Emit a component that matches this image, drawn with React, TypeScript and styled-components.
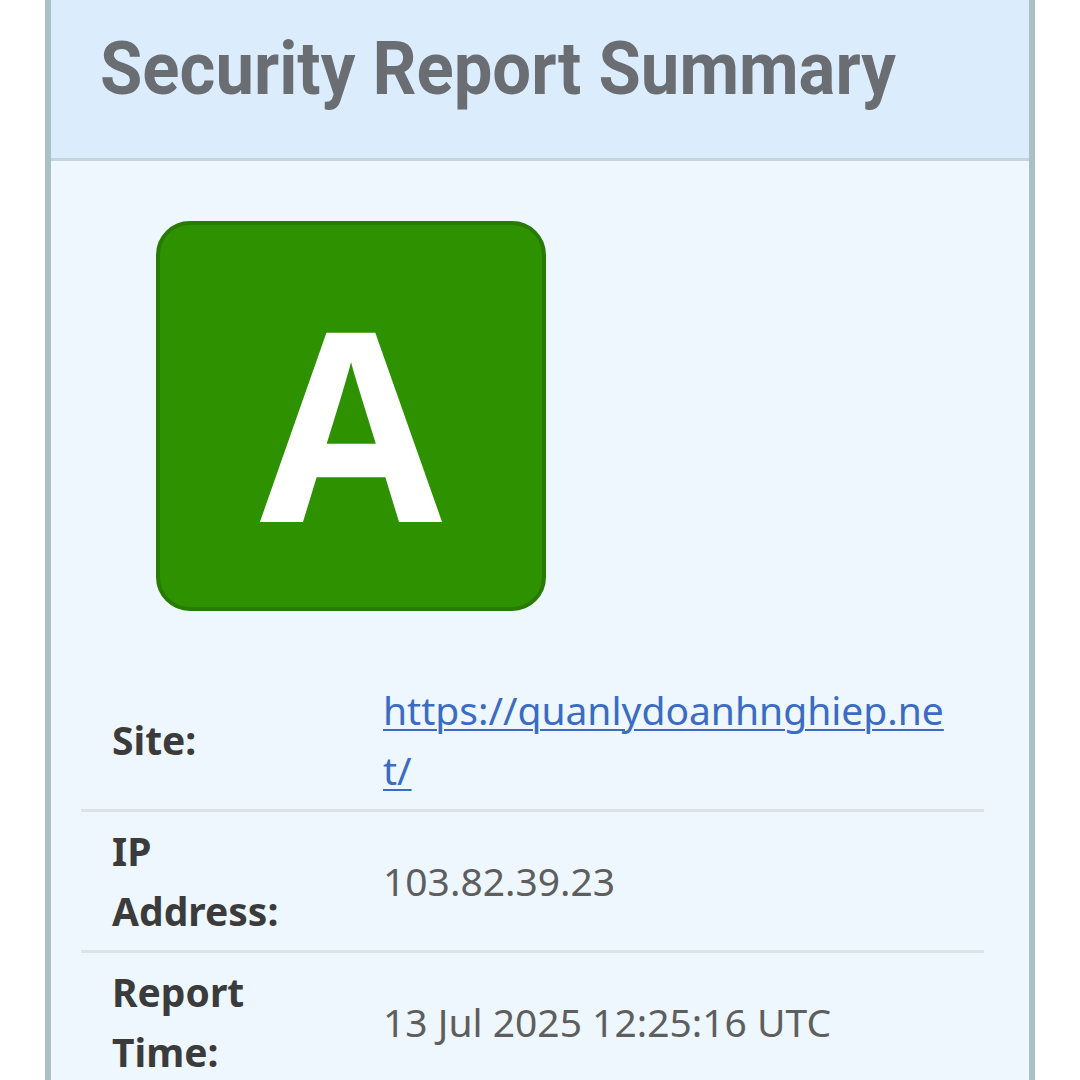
import React from "react";
import styled, { createGlobalStyle } from "styled-components";

const Global = createGlobalStyle`
  html, body { margin: 0; padding: 0; background: #ffffff; }
  body { font-family: "Noto Sans", "Open Sans", sans-serif; }
`;

const Page = styled.div`
  width: 1080px;
  height: 1080px;
  overflow: hidden;
  background: #ffffff;
`;

const Card = styled.section`
  margin-left: 45px;
  width: 990px;
  box-sizing: border-box;
  border-left: 6px solid #a9c1c5;
  border-right: 6px solid #a9c1c5;
  background: #eef6fe;
`;

const Header = styled.header`
  height: 161px;
  box-sizing: border-box;
  background: #dbecfc;
  border-bottom: 3px solid #c3d5df;
  padding: 24px 0 0 49px;
`;

const Title = styled.h1`
  margin: 0;
  font-family: Roboto, "Liberation Sans", sans-serif;
  font-weight: 700;
  font-size: 74px;
  line-height: 90px;
  color: #6a6d72;
  white-space: nowrap;
  transform: scaleX(0.93);
  transform-origin: left center;
`;

const Body = styled.div`
  padding: 60px 45px 40px 30px;
`;

const Grade = styled.div`
  margin-left: 75px;
  width: 390px;
  height: 390px;
  box-sizing: border-box;
  background: #2e9200;
  border: 4px solid #267b00;
  border-radius: 34px;
  display: flex;
  align-items: center;
  justify-content: center;
  padding-top: 8px;
  color: #ffffff;
  font-family: "Open Sans", "Noto Sans", sans-serif;
  font-weight: 700;
  font-size: 264px;
  line-height: 1;
`;

const Table = styled.div`
  margin-top: 60px;
  width: 903px;
  display: grid;
  grid-template-columns: 302px 1fr;
`;

const Row = styled.div`
  display: contents;
`;

const Cell = styled.div<{ $last?: boolean }>`
  padding: 9px 0;
  border-bottom: ${(p) => (p.$last ? "none" : "3px solid #dde3e7")};
  display: flex;
  align-items: center;
  font-size: 39px;
  line-height: 60px;
`;

const Label = styled(Cell)`
  padding-left: 31px;
  padding-right: 80px;
  font-weight: 700;
  color: #3b3b3b;
`;

const Value = styled(Cell)`
  padding-right: 36px;
  color: #5e5e5e;
`;

const Link = styled.a`
  color: #3a6cc4;
  text-decoration: underline;
  text-decoration-thickness: 2px;
  text-underline-offset: 4px;
  word-break: break-all;
`;

const rows = [
  { label: "Site:", value: "https://quanlydoanhnghiep.net/", link: true },
  { label: "IP Address:", value: "103.82.39.23" },
  { label: "Report Time:", value: "13 Jul 2025 12:25:16 UTC" },
];

export default function App() {
  return (
    <Page>
      <Global />
      <Card>
        <Header>
          <Title>Security Report Summary</Title>
        </Header>
        <Body>
          <Grade>A</Grade>
          <Table>
            {rows.map((r, i) => (
              <Row key={r.label}>
                <Label $last={i === rows.length - 1}>{r.label}</Label>
                <Value $last={i === rows.length - 1}>
                  {r.link ? <Link href="#">{r.value}</Link> : r.value}
                </Value>
              </Row>
            ))}
          </Table>
        </Body>
      </Card>
    </Page>
  );
}
